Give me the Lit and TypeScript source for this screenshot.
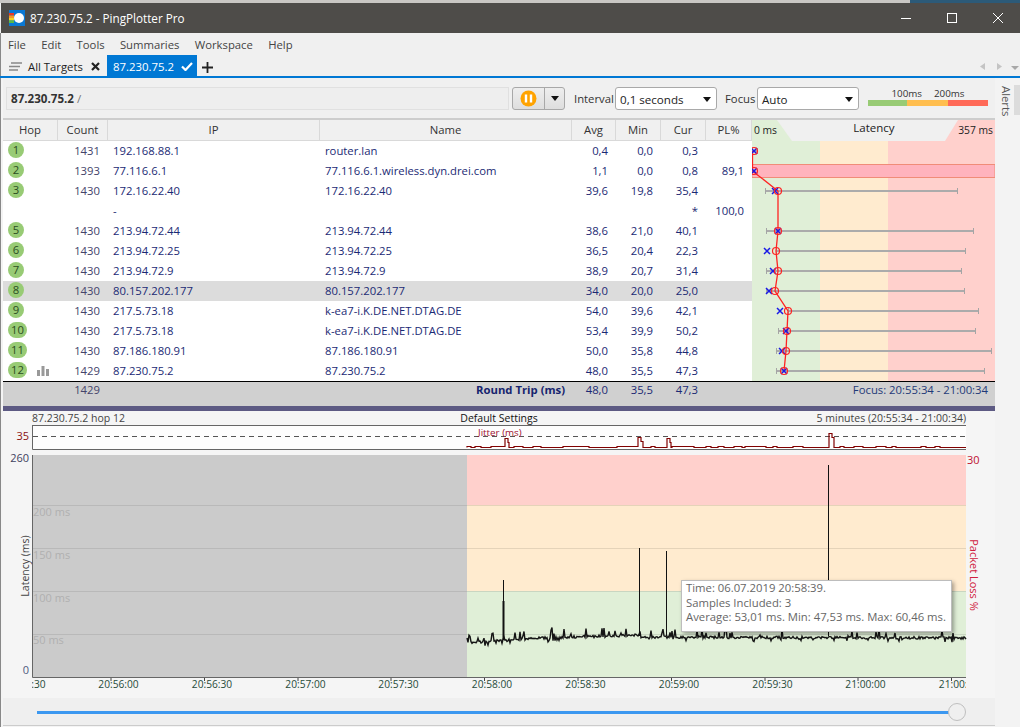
import { LitElement, html, css, svg } from "lit";
import { customElement } from "lit/decorators.js";

interface Hop { n: string; count: string; ip: string; name: string; avg: string; min: string; cur: string; pl: string; }
const HOPS: Hop[] = [
  { n: "1", count: "1431", ip: "192.168.88.1", name: "router.lan", avg: "0,4", min: "0,0", cur: "0,3", pl: "" },
  { n: "2", count: "1393", ip: "77.116.6.1", name: "77.116.6.1.wireless.dyn.drei.com", avg: "1,1", min: "0,0", cur: "0,8", pl: "89,1" },
  { n: "3", count: "1430", ip: "172.16.22.40", name: "172.16.22.40", avg: "39,6", min: "19,8", cur: "35,4", pl: "" },
  { n: "", count: "", ip: "-", name: "", avg: "", min: "", cur: "*", pl: "100,0" },
  { n: "5", count: "1430", ip: "213.94.72.44", name: "213.94.72.44", avg: "38,6", min: "21,0", cur: "40,1", pl: "" },
  { n: "6", count: "1430", ip: "213.94.72.25", name: "213.94.72.25", avg: "36,5", min: "20,4", cur: "22,3", pl: "" },
  { n: "7", count: "1430", ip: "213.94.72.9", name: "213.94.72.9", avg: "38,9", min: "20,7", cur: "31,4", pl: "" },
  { n: "8", count: "1430", ip: "80.157.202.177", name: "80.157.202.177", avg: "34,0", min: "20,0", cur: "25,0", pl: "" },
  { n: "9", count: "1430", ip: "217.5.73.18", name: "k-ea7-i.K.DE.NET.DTAG.DE", avg: "54,0", min: "39,6", cur: "42,1", pl: "" },
  { n: "10", count: "1430", ip: "217.5.73.18", name: "k-ea7-i.K.DE.NET.DTAG.DE", avg: "53,4", min: "39,9", cur: "50,2", pl: "" },
  { n: "11", count: "1430", ip: "87.186.180.91", name: "87.186.180.91", avg: "50,0", min: "35,8", cur: "44,8", pl: "" },
  { n: "12", count: "1429", ip: "87.230.75.2", name: "87.230.75.2", avg: "48,0", min: "35,5", cur: "47,3", pl: "" },
];

// y, circle x, cross x, bar from, bar to
const TRACE: [number, number, number, number, number][] = [
  [151, 754, 754, 752, 758],
  [171, 754, 754, 752, 752],
  [191, 778, 775, 765, 958],
  [231, 778, 778, 766, 974],
  [251, 776, 767, 776, 966],
  [271, 778, 773, 766, 962],
  [291, 775, 769, 766, 965],
  [311, 788, 780, 788, 979],
  [331, 787, 786, 778, 976],
  [351, 786, 782, 776, 992],
  [371, 784, 784, 776, 985],
];

function rng(seed: number) {
  let s = seed;
  return () => {
    s = (s * 1664525 + 1013904223) % 4294967296;
    return s / 4294967296;
  };
}

function latencyPath(): string {
  const r = rng(11);
  let d = "M467 638";
  let y = 641;
  for (let x = 468; x <= 966; x += 1) {
    const base = x < 540 ? 643 - ((x - 467) / 73) * 5 : x < 640 ? 638 - ((x - 540) / 100) * 3 : 637 + ((x - 640) / 326) * 1;
    y = base + (r() - 0.5) * 2.5;
    const u = r();
    if (u < 0.12) y -= 3 + r() * 6;
    else if (u < 0.18) y += 3;
    d += `L${x} ${y.toFixed(1)}`;
  }
  return d;
}

function jitterPath(): string {
  const r = rng(21);
  const spikes: [number, number, number][] = [[505, 510, 438], [638, 644, 437], [667, 672, 438], [829, 835, 433]];
  let d = "M467 447.500";
  let x = 467;
  while (x < 966) {
    const sp = spikes.find((s) => x >= s[0] - 10 && x < s[1]);
    if (sp) {
      d += `H${sp[0]}V${sp[2] + 0.5}H${sp[0] + 3}V${sp[2] + 4.5}H${sp[1] - 1}V447.500H${sp[1]}`;
      x = sp[1];
      continue;
    }
    const step = 3 + Math.floor(r() * 8);
    const y = r() < 0.35 ? 446.5 : 447.5;
    x = Math.min(x + step, 966);
    d += `V${y}H${x}`;
  }
  return d;
}

const LAT = latencyPath();
const JIT = jitterPath();
const X_TICKS: [number, string][] = [
  [18, "20:55:30"], [111, "20:56:00"], [204.5, "20:56:30"], [298, "20:57:00"], [391, "20:57:30"],
  [484.500, "20:58:00"], [578, "20:58:30"], [671.5, "20:59:00"], [765, "20:59:30"], [858, "21:00:00"], [951.5, "21:00:30"],
];

@customElement("app-root")
export class AppRoot extends LitElement {
  static styles = css`
    :host {
      display: block;
      width: 1020px;
      height: 727px;
      overflow: hidden;
      background: #f0f0f0;
      font-family: "Open Sans", "Noto Sans", sans-serif;
      font-size: 11.3px;
      color: #333;
    }
    .strip { height: 3px; background: linear-gradient(90deg, #c9c7c4 0 910px, #2c5a78 910px); }
    .titlebar {
      height: 30px;
      background: #4e4c49;
      color: #fff;
      display: flex;
      align-items: center;
      margin-left: 1px;
      font-size: 11.7px;
    }
    .app-icon { width: 16px; height: 16px; margin: 0 5px 0 8px; }
    .title { flex: 1; }
    .winbtn { width: 46px; display: flex; justify-content: center; }
    .winbtn svg { display: block; margin-left: 2px; }
    .menu { height: 22px; display: flex; align-items: center; padding-left: 7px; gap: 15.3px; font-size: 11.3px; color: #444; border-left: 1px solid #888; }
    .tabs { height: 21px; display: flex; align-items: stretch; border-left: 1px solid #888; }
    .tab-all { display: flex; align-items: center; width: 106px; padding: 2px 0 0 8px; box-sizing: border-box; gap: 6px; color: #222; }
    .tab-x { margin-left: 2px; }
    .tab-on { width: 90px; background: #0078d4; color: #fff; display: flex; align-items: center; padding: 2px 0 0 6px; gap: 7px; box-sizing: border-box; font-size: 11.4px; }
    .tab-plus { margin: 3px 0 0 5px; align-self: center; }
    .tab-arrows { margin: 2px 1px 0 auto; align-self: center; }
    .blue { height: 2px; background: #0078d4; }
    .body { display: flex; height: 649px; background: #f4f4f4; }
    .main { width: 992px; margin-left: 2px; }
    .edge { width: 1px; background: #888; }
    .gutter { width: 25px; position: relative; background: #f3f3f3; }
    .alerts { position: absolute; left: 4px; top: 8px; writing-mode: vertical-rl; color: #555; font-size: 11.3px; line-height: 14px; }
    .thumb { position: absolute; right: 0; top: 7px; width: 6px; height: 30px; background: #dcdcdc; }
    .toolbar { height: 42px; border-bottom: 2px solid #cdcdcd; display: flex; align-items: flex-start; padding: 9px 0 0 3px; box-sizing: border-box; background: #f0f0f0; }
    .crumb { width: 503px; height: 23px; box-sizing: border-box; background: #eeeeee; border: 1px solid #e0e0e0; line-height: 21px; padding-left: 4px; color: #333; font-size: 11.6px; }
    .crumb b { font-weight: 700; }
    .crumb span { color: #777; }
    .pause { display: flex; height: 23px; margin-left: 3px; width: 53px; box-sizing: border-box; border: 1px solid #a8a8a8; border-radius: 3px; background: linear-gradient(#eeeeee, #dedede); }
    .pause-main { width: 31px; display: flex; align-items: center; justify-content: center; border-right: 1px solid #a8a8a8; }
    .pause-arrow { flex: 1; display: flex; align-items: center; justify-content: center; }
    .tri { width: 0; height: 0; border-left: 4.5px solid transparent; border-right: 4.5px solid transparent; border-top: 5px solid #111; }
    .lab { line-height: 23px; color: #333; font-size: 11.3px; white-space: nowrap; }
    .lab.i { width: 38px; margin-left: 9px; }
    .lab.f { width: 29px; margin-left: 8px; }
    .select { width: 102px; height: 23px; box-sizing: border-box; margin-left: 3px; background: #fff; border: 1px solid #a9a9a9; border-radius: 3px; display: flex; align-items: center; justify-content: space-between; padding: 1px 5px 0 4px; font-size: 11.6px; color: #222; }
    .legend { width: 120px; margin-left: 9px; }
    .legend-labels { display: flex; justify-content: center; gap: 12px; font-size: 9.8px; height: 13px; line-height: 13px; color: #333; }
    .legend-bar { display: flex; height: 6px; }
    .lg { background: #98cb75; width: 39px; }
    .lo { background: #ffbe4f; width: 41px; }
    .lr { background: #ff6a58; flex: 1; }
    .grid { display: flex; height: 261px; }
    .cols { width: 749px; }
    .row, .head {
      display: grid;
      grid-template-columns: 55px 50px 212px 252px 44px 45px 45px 46px;
      height: 20px;
      align-items: center;
    }
    .head { height: 21px; background: #f0f0f0; color: #333; }
    .head > div { height: 100%; line-height: 20px; text-align: center; border-right: 1px solid #d9d9d9; box-sizing: border-box; border-bottom: 1px solid #d9d9d9; }
    .row { background: #fff; color: #1b2a74; padding-bottom: 2px; box-sizing: border-box; }
    .row.sel { background: #dcdcdc; }
    .num { text-align: right; padding-right: 8px; }
    .txt { padding-left: 5px; white-space: nowrap; }
    .count { color: #44446a; }
    .hopcell { display: flex; align-items: center; gap: 10px; padding-left: 5px; height: 18px; }
    .badge { min-width: 16px; height: 16px; padding: 0 2px; box-sizing: border-box; border-radius: 8px; background: #98cb75; color: #2c4d22; text-align: center; line-height: 15px; font-size: 11.3px; }
    .wide { min-width: 19px; }
    .lat { width: 243px; display: block; }
    .foot { height: 25px; box-sizing: border-box; border-top: 1px solid #000; background: #d0d0d0; color: #1b2a74; display: grid; grid-template-columns: 55px 50px 464px 44px 45px 45px 1fr; }
    .foot > div { height: 17px; line-height: 16px; }
    .rt { text-align: right; font-weight: 700; padding-right: 7px; color: #16246e; }
    .focus { text-align: right; padding-right: 7px; color: #1f3a78; white-space: nowrap; }
    .sep { height: 5px; background: #5d5a83; }
    .plot { height: 287px; background: #f5f5f5; }
    .plot-head { height: 14px; line-height: 14px; display: grid; grid-template-columns: 1fr auto 1fr; padding: 0 29px; font-size: 10.5px; color: #444; }
    .plot-head .mid { color: #111; }
    .plot-head .end { text-align: right; }
    .chart-wrap { position: relative; height: 273px; }
    .chart { display: block; width: 992px; height: 273px; font-family: "Open Sans", "Noto Sans", sans-serif; font-size: 11px; }
    .tip {
      position: absolute;
      left: 678px;
      top: 155px;
      width: 271px;
      height: 52px;
      box-sizing: border-box;
      background: #fff;
      border: 1px solid #bdbdbd;
      box-shadow: 2px 2px 4px rgba(0, 0, 0, 0.35);
      padding: 0 4px;
      line-height: 14.5px;
      font-size: 11.3px;
      color: #666;
      white-space: nowrap;
    }
    .slider { height: 28px; box-sizing: border-box; background: #efefef; border-bottom: 1px solid #ccc; position: relative; }
    .track { position: absolute; left: 34px; right: 38px; top: 13px; height: 3px; background: #3c98f0; }
    .knob { position: absolute; left: 945px; top: 5px; width: 18px; height: 18px; box-sizing: border-box; border-radius: 50%; background: #efefef; border: 1px solid #bfbfbf; }
  `;

  private cell(h: Hop, i: number) {
    const wide = h.n.length > 1;
    return html`<div class="row ${i === 7 ? "sel" : ""}">
      <div class="hopcell">
        ${h.n ? html`<span class="badge ${wide ? "wide" : ""}">${h.n}</span>` : ""}
        ${h.n === "12"
          ? html`<svg width="12" height="11" viewBox="0 0 12 11"><path fill="#999" d="M0 5h3v6H0zM4.500 1h3v10h-3zM9 4h3v7H9z"/></svg>`
          : ""}
      </div>
      <div class="num count">${h.count}</div>
      <div class="txt">${h.ip}</div>
      <div class="txt">${h.name}</div>
      <div class="num">${h.avg}</div>
      <div class="num">${h.min}</div>
      <div class="num">${h.cur}</div>
      <div class="num">${h.pl}</div>
    </div>`;
  }

  private latency() {
    const pts = TRACE.map((t) => `${t[1]},${t[0]}`).slice(2).join(" ");
    return html`<svg class="lat" width="243" height="261" viewBox="752 120 243 261" font-family="Open Sans, Noto Sans, sans-serif">
      <rect x="752" y="120" width="68" height="261" fill="#e0efd7"/>
      <rect x="820" y="120" width="68" height="261" fill="#ffebcf"/>
      <rect x="888" y="120" width="107" height="261" fill="#ffd0cc"/>
      <polygon points="777,120 958,120 945,141 792,141" fill="#f0f0f0"/>
      <text x="754" y="134" font-size="10.300" fill="#222">0 ms</text>
      <text x="874" y="132" font-size="11.500" fill="#222" text-anchor="middle">Latency</text>
      <text x="993" y="134" font-size="10.300" fill="#222" text-anchor="end">357 ms</text>
      <rect x="752" y="164.500" width="243" height="13" fill="#ffb3bd" stroke="#f08c78" stroke-width="1"/>
      ${TRACE.map(
        (t) => svg`<g>
          <path d="M${t[3]} ${t[0]}H${t[4]}" stroke="#ababab" stroke-width="2"/>
          ${t[4] > 752 ? svg`<path d="M${t[3] + 0.5} ${t[0] - 3}v6M${t[4] - 0.5} ${t[0] - 3}v6" stroke="#a5a5a5" stroke-width="1"/>` : ""}
        </g>`
      )}
      <polyline points="752.500,151 752.500,171 ${pts}" fill="none" stroke="#f22" stroke-width="1.300"/>
      ${TRACE.map(
        (t) => svg`<g>
          <path d="M${t[2] - 3} ${t[0] - 3}l6 6m0 -6l-6 6" stroke="#1a1ae6" stroke-width="1.500" fill="none"/>
          <circle cx="${t[1]}" cy="${t[0]}" r="3.500" fill="none" stroke="#f22" stroke-width="1.200"/>
        </g>`
      )}
    </svg>`;
  }

  private chart() {
    const o = 3; // page x of the svg's left edge
    return html`<svg class="chart" viewBox="${o} 425 992 273">
      <defs>
        <clipPath id="axis"><rect x="32" y="678" width="934" height="20"/></clipPath>
      </defs>
      <rect x="32" y="425.500" width="934" height="24" fill="#fdfdfd"/>
      <path d="M32.500 425V449.500H966M32 425.500H966" stroke="#666" fill="none"/>
      <path d="M33 436.500H966" stroke="#555" stroke-dasharray="5 4" fill="none"/>
      <path d="${JIT}" stroke="#800000" stroke-width="1.200" fill="none"/>
      <text x="478" y="436" font-size="9.800" fill="#a01030">Jitter (ms)</text>
      <text x="29" y="440" text-anchor="end" fill="#8a1010" font-size="11">35</text>

      <rect x="32" y="455" width="435" height="222" fill="#cbcbcb"/>
      <rect x="467" y="455" width="499" height="50" fill="#ffd0cc"/>
      <rect x="467" y="505" width="499" height="86" fill="#ffebcf"/>
      <rect x="467" y="591" width="499" height="86" fill="#e0efd7"/>
      ${[505, 548, 591, 634].map(
        (y) => svg`<path d="M32 ${y + 0.5}H467" stroke="#b9b9b9"/><path d="M467 ${y + 0.5}H966" stroke="#000" stroke-opacity=".1"/>`
      )}
      ${[["200 ms", 516], ["150 ms", 559], ["100 ms", 602], ["50 ms", 644]].map(
        ([t, y]) => svg`<text x="33" y="${y}" fill="#b0b0b0" font-size="11">${t}</text>`
      )}
      <path d="${LAT}" stroke="#151515" stroke-width="1.400" fill="none"/>
      <path d="M503.500 640V580M639.500 636V548M666.500 636V551M828.500 636V465" stroke="#111" fill="none"/>
      <path d="M503.500 640V601" stroke="#111" stroke-width="2" fill="none"/>
      <path d="M32.500 455V677.500H966" stroke="#666" fill="none"/>
      <text x="29" y="462" text-anchor="end" fill="#3f4160" font-size="11">260</text>
      <text x="29" y="674" text-anchor="end" fill="#4f5a80" font-size="11">0</text>
      <text x="967" y="464" fill="#c01030" font-size="11">30</text>
      <text transform="translate(20 566) rotate(-90)" text-anchor="middle" fill="#444" font-size="10.500" dominant-baseline="hanging">Latency (ms)</text>
      <text transform="translate(970 575) rotate(90)" text-anchor="middle" fill="#d02040" font-size="11">Packet Loss %</text>
      <g clip-path="url(#axis)">
        ${X_TICKS.map(
          ([x, t]) => svg`<path d="M${x} 677v4" stroke="#444"/><text x="${x + 7.5}" y="688" text-anchor="middle" fill="#274b3a" font-size="10.200">${t}</text>`
        )}
      </g>
    </svg>`;
  }

  render() {
    return html`
      <div class="strip"></div>
      <div class="titlebar">
        <svg class="app-icon" viewBox="0 0 16 16">
          <rect width="16" height="16" fill="#0a78d4"/>
          <rect y="3" width="5" height="2.500" fill="#e8392a"/>
          <rect y="5.500" width="5" height="2.500" fill="#f59a23"/>
          <rect y="8" width="5" height="2.500" fill="#f5d423"/>
          <rect y="10.500" width="5" height="2.500" fill="#58b947"/>
          <circle cx="10" cy="8" r="5" fill="#fff"/>
        </svg>
        <div class="title">87.230.75.2 - PingPlotter Pro</div>
        <div class="winbtn"><svg width="10" height="10" viewBox="0 0 10 10"><path d="M0 5.500H10" stroke="#fff"/></svg></div>
        <div class="winbtn"><svg width="10" height="10" viewBox="0 0 10 10"><rect x=".5" y=".5" width="9" height="9" fill="none" stroke="#fff"/></svg></div>
        <div class="winbtn"><svg width="10" height="10" viewBox="0 0 10 10"><path d="M0 0L10 10M10 0L0 10" stroke="#fff"/></svg></div>
      </div>
      <div class="menu">
        <span>File</span><span>Edit</span><span>Tools</span><span>Summaries</span><span>Workspace</span><span>Help</span>
      </div>
      <div class="tabs">
        <div class="tab-all">
          <svg width="13" height="9" viewBox="0 0 13 9"><path d="M2 1H13M0 4.500H11M0 8H9" stroke="#888" stroke-width="1.600"/></svg>
          <span>All Targets</span>
          <svg class="tab-x" width="9" height="9" viewBox="0 0 9 9"><path d="M1 1L8 8M8 1L1 8" stroke="#222" stroke-width="2.200"/></svg>
        </div>
        <div class="tab-on">
          <span>87.230.75.2</span>
          <svg width="12" height="9" viewBox="0 0 12 9"><path d="M1 4.500L4.500 8L11 1" stroke="#fff" stroke-width="2.200" fill="none"/></svg>
        </div>
        <svg class="tab-plus" width="11" height="11" viewBox="0 0 11 11"><path d="M5.500 0V11M0 5.500H11" stroke="#222" stroke-width="1.800"/></svg>
        <svg class="tab-arrows" width="40" height="10" viewBox="0 0 40 10">
          <path d="M6 1V8L1 4.500Z" fill="#c4c4c4"/><path d="M18 1V8L23 4.500Z" fill="#c4c4c4"/><path d="M32 4H40L36 8Z" fill="#a8a8a8"/>
        </svg>
      </div>
      <div class="blue"></div>
      <div class="body">
        <div class="edge"></div>
        <div class="main">
          <div class="toolbar">
            <div class="crumb"><b>87.230.75.2</b> <span>/</span></div>
            <div class="pause">
              <div class="pause-main">
                <svg width="17" height="17" viewBox="0 0 17 17"><circle cx="8.500" cy="8.500" r="8" fill="#ffa300"/><path d="M6 4.500V12.500M11 4.500V12.500" stroke="#fff" stroke-width="2.400"/></svg>
              </div>
              <div class="pause-arrow"><span class="tri"></span></div>
            </div>
            <div class="lab i">Interval</div>
            <div class="select"><span>0,1 seconds</span><span class="tri"></span></div>
            <div class="lab f">Focus</div>
            <div class="select"><span>Auto</span><span class="tri"></span></div>
            <div class="legend">
              <div class="legend-labels"><span>100ms</span><span>200ms</span></div>
              <div class="legend-bar"><div class="lg"></div><div class="lo"></div><div class="lr"></div></div>
            </div>
          </div>
          <div class="grid">
            <div class="cols">
              <div class="head">
                <div>Hop</div><div>Count</div><div>IP</div><div>Name</div><div>Avg</div><div>Min</div><div>Cur</div><div>PL%</div>
              </div>
              ${HOPS.map((h, i) => this.cell(h, i))}
            </div>
            ${this.latency()}
          </div>
          <div class="foot">
            <div></div>
            <div class="num count">1429</div>
            <div class="rt">Round Trip (ms)</div>
            <div class="num">48,0</div>
            <div class="num">35,5</div>
            <div class="num">47,3</div>
            <div class="focus">Focus: 20:55:34 - 21:00:34</div>
          </div>
          <div class="sep"></div>
          <div class="plot">
            <div class="plot-head">
              <div>87.230.75.2 hop 12</div>
              <div class="mid">Default Settings</div>
              <div class="end">5 minutes (20:55:34 - 21:00:34)</div>
            </div>
            <div class="chart-wrap">
              ${this.chart()}
              <div class="tip">
                <div>Time: 06.07.2019 20:58:39.</div>
                <div>Samples Included: 3</div>
                <div>Average: 53,01 ms. Min: 47,53 ms. Max: 60,46 ms.</div>
              </div>
            </div>
          </div>
          <div class="slider">
            <div class="track"></div>
            <div class="knob"></div>
          </div>
        </div>
        <div class="gutter">
          <div class="alerts">Alerts</div>
          <div class="thumb"></div>
        </div>
      </div>
    `;
  }
}
